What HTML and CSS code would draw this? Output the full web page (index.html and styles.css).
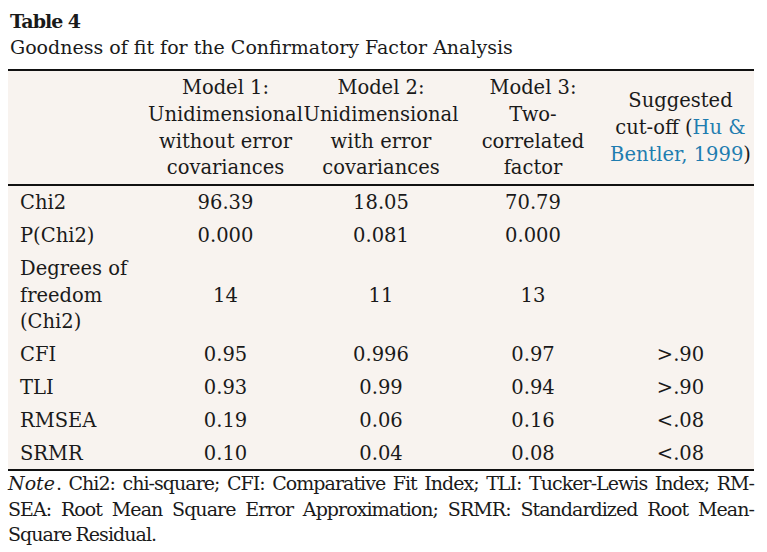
FILE: index.html
```html
<!DOCTYPE html>
<html>
<head>
<meta charset="utf-8">
<link rel="stylesheet" href="styles.css">
</head>
<body>
<div class="wrap">
  <div class="label">Table 4</div>
  <div class="caption">Goodness of fit for the Confirmatory Factor Analysis</div>
  <table class="tbl">
    <colgroup>
      <col class="c1"><col class="c2"><col class="c3"><col class="c4"><col class="c5">
    </colgroup>
    <thead>
      <tr>
        <th class="first"></th>
        <th>Model 1:<br>Unidimensional<br>without error<br>covariances</th>
        <th>Model 2:<br>Unidimensional<br>with error<br>covariances</th>
        <th>Model 3:<br>Two-<br>correlated<br>factor</th>
        <th>Suggested<br>cut-off (<span class="link">Hu &amp;<br>Bentler, 1999</span>)</th>
      </tr>
    </thead>
    <tbody>
      <tr class="r1"><td class="first">Chi2</td><td>96.39</td><td>18.05</td><td>70.79</td><td></td></tr>
      <tr><td class="first">P(Chi2)</td><td>0.000</td><td>0.081</td><td>0.000</td><td></td></tr>
      <tr><td class="first">Degrees of<br>freedom<br>(Chi2)</td><td>14</td><td>11</td><td>13</td><td></td></tr>
      <tr><td class="first">CFI</td><td>0.95</td><td>0.996</td><td>0.97</td><td>&gt;.90</td></tr>
      <tr><td class="first">TLI</td><td>0.93</td><td>0.99</td><td>0.94</td><td>&gt;.90</td></tr>
      <tr><td class="first">RMSEA</td><td>0.19</td><td>0.06</td><td>0.16</td><td>&lt;.08</td></tr>
      <tr class="last"><td class="first">SRMR</td><td>0.10</td><td>0.04</td><td>0.08</td><td>&lt;.08</td></tr>
    </tbody>
  </table>
  <p class="note"><em>Note</em>. Chi2: chi-square; CFI: Comparative Fit Index; TLI: Tucker-Lewis Index; RM-SEA: Root Mean Square Error Approximation; SRMR: Standardized Root Mean-Square Residual.</p>
</div>
</body>
</html>
```
FILE: styles.css
```css
html, body {
  margin: 0;
  padding: 0;
  background: #ffffff;
}
body {
  font-family: "DejaVu Serif", serif;
  color: #1a1a1a;
}
.wrap {
  padding: 8px 13px 0 8px;
}
.label {
  font-weight: bold;
  font-size: 19px;
  letter-spacing: -1px;
  line-height: 27px;
  padding-left: 2px;
}
.caption {
  font-size: 19px;
  line-height: 24px;
  padding-left: 2px;
  margin-bottom: 10px;
}
.tbl {
  width: 746px;
  border-collapse: collapse;
  background: #f8f3ef;
  border-top: 2px solid #111;
  border-bottom: 2px solid #111;
  font-size: 19.5px;
  line-height: 26.8px;
}
.c1 { width: 140px; }
.c2 { width: 155px; }
.c3 { width: 156px; }
.c4 { width: 148px; }
.c5 { width: 147px; }
.tbl th {
  font-weight: normal;
  text-align: center;
  vertical-align: middle;
  padding: 4px 0 2px;
  border-bottom: 2px solid #111;
}
.tbl td {
  text-align: center;
  vertical-align: middle;
  padding: 3px 0;
}
.tbl td.first {
  text-align: left;
  padding-left: 12px;
}
.tbl tr.r1 td { padding-top: 4px; }
.tbl tr.last td { padding-bottom: 2px; }
.link { color: #1f7db0; }
.note {
  margin: 0;
  font-size: 19px;
  line-height: 25.5px;
  text-align: justify;
  letter-spacing: -0.95px;
  word-spacing: -1px;
}
.note em {
  letter-spacing: 0;
  margin-right: 1px;
}
```
